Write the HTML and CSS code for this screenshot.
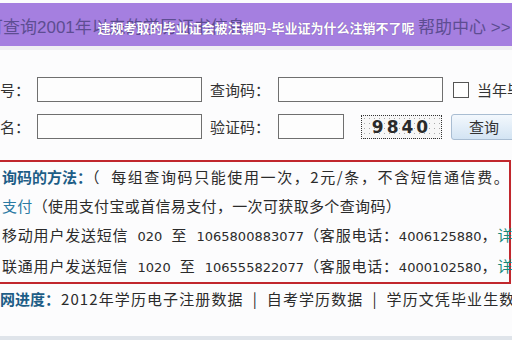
FILE: index.html
```html
<!DOCTYPE html>
<html lang="zh-CN">
<head>
    <meta charset="UTF-8">
    <meta name="viewport" content="width=device-width, initial-scale=1.0">
    <title>违规考取的毕业证会被注销吗-毕业证为什么注销不了呢</title>
    <link rel="stylesheet" href="styles.css">
</head>
<body>
    <div class="topbar">
        <span class="crumb">可查询2001年以来的学历证书信息</span>
        <span class="help">帮助中心 &gt;&gt;</span>
        <h1 class="title">违规考取的毕业证会被注销吗-毕业证为什么注销不了呢</h1>
    </div>

    <form class="query">
        <div class="row">
            <span class="lab lab-first">证书编号：</span>
            <input type="text" class="field field-wide">
            <span class="lab">查询码：</span>
            <input type="text" class="field field-wide">
            <span class="check"></span>
            <span class="lab">当年毕业</span>
        </div>
        <div class="row">
            <span class="lab lab-first lab-name">姓名：</span>
            <input type="text" class="field field-wide">
            <span class="lab">验证码：</span>
            <input type="text" class="field field-short">
            <span class="captcha">9840</span>
            <button type="button" class="btn">查询</button>
        </div>
    </form>

    <div class="howto">
        <p class="ln"><b class="head">询码的方法：</b><span class="note"><span class="paren">（</span>每组查询码只能使用一次，2元/条，不含短信通信费。</span></p>
        <p class="ln"><span class="link">支付</span>（使用支付宝或首信易支付，一次可获取多个查询码）</p>
        <p class="ln ln-sms">移动用户发送短信 <span class="num">020</span> 至 <span class="num">1065800883077</span>（客服电话：<span class="num">4006125880</span>，<span class="more">详细</span></p>
        <p class="ln ln-sms">联通用户发送短信 <span class="num">1020</span> 至 <span class="num">106555822077</span>（客服电话：<span class="num">4000102580</span>，<span class="more">详细</span></p>
    </div>

    <p class="progress"><b class="head">网进度：</b>2012年学历电子注册数据<span class="sep">|</span>自考学历数据<span class="sep">|</span>学历文凭毕业生数据</p>

    <div class="foot"></div>
</body>
</html>
```

FILE: styles.css
```css
html, body {
    margin: 0;
    padding: 0;
}
body {
    width: 512px;
    height: 340px;
    overflow: hidden;
    background: #fcfcfd;
    color: #2b2b2b;
    font-family: "Noto Sans CJK SC", "DejaVu Sans", sans-serif;
    font-size: 15px;
    position: relative;
}
.topbar {
    margin-top: 3px;
    height: 43px;
    background: #a57fe0;
    display: flex;
    align-items: center;
    position: relative;
    border-bottom: 4px solid #f0eff3;
    white-space: nowrap;
}
.crumb {
    flex: 1;
    margin-left: -14px;
    padding-top: 2px;
    font-family: "Liberation Sans", "Noto Sans CJK SC", sans-serif;
    font-size: 17px;
    color: #5d4d92;
    overflow: hidden;
}
.help {
    width: 94px;
    padding-top: 2px;
    font-family: "Liberation Sans", "Noto Sans CJK SC", sans-serif;
    font-size: 17px;
    color: #5d4d92;
}
.title {
    position: absolute;
    left: 0;
    right: 0;
    top: 15px;
    margin: 0;
    text-align: center;
    font-size: 13px;
    font-weight: 700;
    color: #fff;
    text-shadow: 0 0 1px rgba(60, 30, 110, 0.6);
}
.query {
    margin: 0;
    padding-top: 27px;
}
.row {
    display: flex;
    align-items: center;
    height: 25px;
    margin-bottom: 12px;
    white-space: nowrap;
}
.row > * {
    flex-shrink: 0;
}
.lab {
    color: #333;
}
.lab-first {
    margin-left: -45px;
    width: 75px;
    margin-right: 7px;
}
.lab-name {
    margin-left: -15px;
    width: 45px;
}
.field {
    height: 25px;
    box-sizing: border-box;
    border: 1px solid #6f6f6f;
    background: #fdfdfd;
    margin: 0 8px 0 0;
    padding: 0;
}
.field-wide {
    width: 165px;
}
.row .field + .lab + .field {
    margin-left: 8px;
}
.field-short {
    width: 66px;
}
.check {
    width: 16px;
    height: 16px;
    box-sizing: border-box;
    border: 1px solid #555;
    background: #fff;
    margin: 0 8px 0 2px;
}
.captcha {
    width: 81px;
    height: 24px;
    box-sizing: border-box;
    margin-left: 9px;
    border: 1px dotted #333;
    background: radial-gradient(#aaa 0.6px, transparent 0.8px) 0 0 / 5px 5px, #f7f7f7;
    font-family: "DejaVu Sans", sans-serif;
    font-weight: 700;
    font-size: 17px;
    letter-spacing: 3px;
    color: #2a2a2a;
    text-align: center;
    line-height: 22px;
}
.btn {
    margin-left: 9px;
    width: 76px;
    height: 26px;
    border: 1px solid #a9bdd2;
    border-radius: 3px;
    background: linear-gradient(#f3f8fd, #d3e4f3);
    font-family: inherit;
    font-size: 15px;
    color: #333;
    padding: 0 10px 0 0;
}
.howto {
    margin: 21px 0 0 -10px;
    width: 521px;
    box-sizing: border-box;
    border: 2px solid #c1272d;
    padding-left: 10px;
}
.ln {
    margin: 0;
    line-height: 29px;
    white-space: nowrap;
    letter-spacing: 0.35px;
}
.note {
    letter-spacing: 1.6px;
}
.paren {
    margin-right: 10px;
}
.ln-sms {
    letter-spacing: 0.8px;
    word-spacing: 5px;
}
.head {
    color: #1d5d86;
    letter-spacing: 0;
}
.link {
    color: #2a7aa3;
}
.more {
    color: #16897a;
}
.num {
    font-family: "DejaVu Sans", sans-serif;
    font-size: 13px;
    letter-spacing: 0;
}
.progress {
    margin: 0;
    line-height: 29px;
    white-space: nowrap;
    letter-spacing: 1.1px;
}
.progress .head {
    margin-right: 1px;
}
.sep {
    margin: 0 9px;
}
.foot {
    position: absolute;
    left: 0;
    right: 0;
    bottom: 0;
    height: 4px;
    background: #dfe4ea;
}
```
